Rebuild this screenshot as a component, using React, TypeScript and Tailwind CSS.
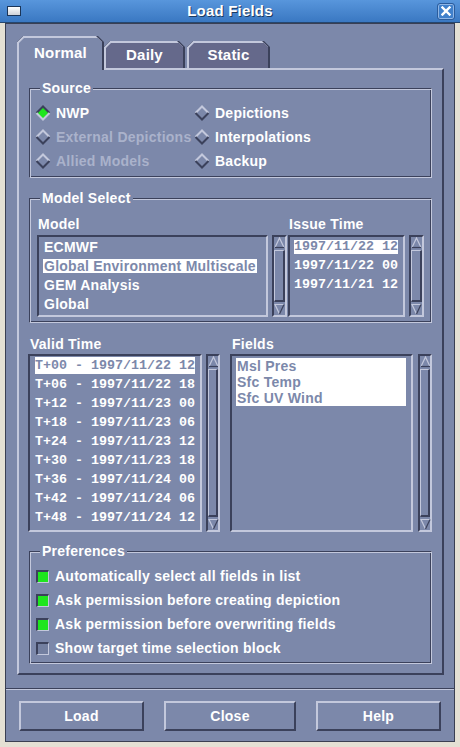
import React from 'react';

const RAISED = 'border-2 border-t-[#c3c8dc] border-l-[#c3c8dc] border-b-[#3b415b] border-r-[#3b415b]';
const SUNKEN = 'border-2 border-t-[#3b415b] border-l-[#3b415b] border-b-[#c3c8dc] border-r-[#c3c8dc]';

const sources = [
  { label: 'NWP', on: true },
  { label: 'Depictions' },
  { label: 'External Depictions', disabled: true },
  { label: 'Interpolations' },
  { label: 'Allied Models', disabled: true },
  { label: 'Backup' },
];

const models = ['ECMWF', 'Global Environment Multiscale', 'GEM Analysis', 'Global'];
const issueTimes = ['1997/11/22 12', '1997/11/22 00', '1997/11/21 12'];
const validTimes = [
  'T+00 - 1997/11/22 12',
  'T+06 - 1997/11/22 18',
  'T+12 - 1997/11/23 00',
  'T+18 - 1997/11/23 06',
  'T+24 - 1997/11/23 12',
  'T+30 - 1997/11/23 18',
  'T+36 - 1997/11/24 00',
  'T+42 - 1997/11/24 06',
  'T+48 - 1997/11/24 12',
];
const fields = ['Msl Pres', 'Sfc Temp', 'Sfc UV Wind'];
const prefs = [
  { label: 'Automatically select all fields in list', on: true },
  { label: 'Ask permission before creating depiction', on: true },
  { label: 'Ask permission before overwriting fields', on: true },
  { label: 'Show target time selection block', on: false },
];

const Diamond = ({ on }: { on?: boolean }) => {
  const hi = on ? '#3b415b' : '#c3c8dc';
  const lo = on ? '#c3c8dc' : '#3b415b';
  return (
    <svg width="16" height="16" viewBox="0 0 16 16" className="shrink-0">
      <polygon points="8,1 15,8 8,15 1,8" fill={on ? '#1ee61e' : '#7c88aa'} />
      <polyline points="1.5,8 8,1.5 14.5,8" fill="none" stroke={hi} strokeWidth="2" />
      <polyline points="1.5,8 8,14.5 14.5,8" fill="none" stroke={lo} strokeWidth="2" />
    </svg>
  );
};

const Check = ({ on }: { on: boolean }) => (
  <div
    className={`w-[13px] h-[13px] shrink-0 border-t-2 border-l-2 border-b border-r border-t-[#3b415b] border-l-[#3b415b] border-b-[#c3c8dc] border-r-[#c3c8dc] ${
      on ? 'bg-[#1ee61e]' : 'bg-[#737fa0]'
    }`}
  />
);

const GroupBox = ({ title, className, children }: { title: string; className: string; children: React.ReactNode }) => (
  <fieldset
    className={`min-w-0 border border-t-[#3b415b] border-l-[#3b415b] border-b-[#c3c8dc] border-r-[#c3c8dc] shadow-[inset_1px_1px_0_#c3c8dc,inset_-1px_-1px_0_#3b415b] ${className}`}
  >
    <legend className="ml-[10px] px-[2px] bg-[#7c88aa] text-[14px] leading-[16px] font-bold tracking-[0.25px] text-white">
      {title}
    </legend>
    {children}
  </fieldset>
);

const ScrollBar = ({ className }: { className: string }) => (
  <div className={`flex flex-col items-center ${SUNKEN} ${className}`}>
    <svg width="11" height="12" viewBox="0 0 11 12" className="shrink-0">
      <polygon points="5.5,1 10,10.5 1,10.5" fill="#7c88aa" />
      <polyline points="1,10.5 5.5,1 10,10.5" fill="none" stroke="#c3c8dc" strokeWidth="1.2" />
      <line x1="1" y1="10.5" x2="10" y2="10.5" stroke="#3b415b" strokeWidth="1.2" />
    </svg>
    <div className="flex-1 w-full my-[1px] border-t border-l border-b-2 border-r-2 border-t-[#c3c8dc] border-l-[#c3c8dc] border-b-[#3b415b] border-r-[#3b415b]" />
    <svg width="11" height="12" viewBox="0 0 11 12" className="shrink-0">
      <polygon points="1,1.5 10,1.5 5.5,11" fill="#7c88aa" />
      <polyline points="5.5,11 1,1.5 10,1.5" fill="none" stroke="#c3c8dc" strokeWidth="1.2" />
      <line x1="10" y1="1.5" x2="5.5" y2="11" stroke="#3b415b" strokeWidth="1.2" />
    </svg>
  </div>
);

const Tab = ({ label, active, className }: { label: string; active?: boolean; className: string }) => (
  <div
    className={`bg-[#3b415b] pr-[2px] [clip-path:polygon(6px_0,calc(100%_-_6px)_0,100%_6px,100%_100%,0_100%,0_6px)] ${className}`}
  >
    <div className="h-full bg-[#c3c8dc] pt-[2px] pl-[2px] [clip-path:polygon(6px_0,calc(100%_-_6px)_0,100%_6px,100%_100%,0_100%,0_6px)]">
      <div
        className={`h-full flex items-center justify-center text-white font-bold text-[15px] tracking-[0.2px] [clip-path:polygon(5px_0,calc(100%_-_4px)_0,100%_4px,100%_100%,0_100%,0_5px)] ${
          active ? 'bg-[#7c88aa] pb-[2px]' : 'bg-[#65698b]'
        }`}
      >
        {label}
      </div>
    </div>
  </div>
);

const Button = ({ label, className }: { label: string; className: string }) => (
  <div className={`h-[30px] flex items-center justify-center text-white font-bold text-[14px] tracking-[0.25px] ${RAISED} ${className}`}>
    {label}
  </div>
);

export default function App() {
  return (
    <div className="w-[460px] h-[747px] flex flex-col overflow-hidden font-['Liberation_Sans',Arial,sans-serif] text-white">
      {/* title bar */}
      <div className="h-[23px] shrink-0 grid grid-cols-[1fr_auto_1fr] items-center bg-linear-to-b from-[#5896dc] to-[#3a78c2] border-b border-[#25466f]">
        <div className="ml-[7px] w-[14px] h-[10px] border border-[#1b3558] bg-linear-to-b from-[#ffffff] to-[#cfd2d8]" />
        <div className="text-[15px] font-bold tracking-[0.2px] [text-shadow:1px_1px_0_#1c3a60]">Load Fields</div>
        <div className="justify-self-end mr-[5px] w-[18px] h-[17px] rounded-[3px] border border-[#2b5c9c] shadow-[inset_0_0_0_1px_#8fb6e6] bg-[#4080cb] flex items-center justify-center">
          <svg width="10" height="10" viewBox="0 0 10 10">
            <path d="M1.5 1.5L8.5 8.5M8.5 1.5L1.5 8.5" stroke="#ffffff" strokeWidth="2.4" strokeLinecap="square" />
          </svg>
        </div>
      </div>

      {/* window body */}
      <div className="flex-1 bg-[#e4e0d4] px-[5px] pb-[5px]">
        <div className="h-full border border-[#3a3f52] bg-[#7c88aa] flex flex-col">
          <div className="pt-[12px] pl-[11px] pr-[10px]">
            <div className="relative z-10 flex items-end">
              <Tab label="Normal" active className="w-[87px] h-[34px] mb-[-2px]" />
              <Tab label="Daily" className="w-[81px] h-[27px]" />
              <Tab label="Static" className="ml-[2px] w-[83px] h-[27px]" />
            </div>

            <div className={`h-[607px] flex flex-col ${RAISED}`}>
              {/* Source */}
              <GroupBox title="Source" className="mx-[10px] mt-[10px]">
                <div className="grid grid-cols-[159px_1fr] pl-[5px] pt-[5px] pb-[4px]">
                  {sources.map((s) => (
                    <div key={s.label} className="h-[24px] flex items-center gap-[5px]">
                      <Diamond on={s.on} />
                      <span
                        className={`text-[14px] leading-[16px] font-bold tracking-[0.25px] whitespace-nowrap ${
                          s.disabled ? 'text-[#aab2cb]' : 'text-white'
                        }`}
                      >
                        {s.label}
                      </span>
                    </div>
                  ))}
                </div>
              </GroupBox>

              {/* Model Select */}
              <GroupBox title="Model Select" className="mx-[10px] mt-[12px]">
                <div className="flex pl-[7px] pr-[7px] pt-[10px] pb-[5px]">
                  <div className="flex flex-col w-[251px]">
                    <div className="pl-[1px] h-[16px] leading-[16px] mb-[3px] text-[14px] font-bold tracking-[0.25px]">Model</div>
                    <div className="flex h-[82px]">
                      <div className={`w-[231px] pl-[4px] ${SUNKEN}`}>
                        {models.map((m, i) => (
                          <div key={m} className="h-[19px] flex items-center">
                            <span
                              className={`inline-block px-[1px] leading-[14px] text-[14px] font-bold tracking-[0.25px] whitespace-nowrap ${
                                i === 1 ? 'bg-white text-[#7c88aa]' : 'text-white'
                              }`}
                            >
                              {m}
                            </span>
                          </div>
                        ))}
                      </div>
                      <ScrollBar className="ml-[4px] w-[15px]" />
                    </div>
                  </div>
                  <div className="flex flex-col">
                    <div className="pl-[1px] h-[16px] leading-[16px] mb-[3px] text-[14px] font-bold tracking-[0.25px]">Issue Time</div>
                    <div className="flex h-[82px]">
                      <div className={`w-[117px] pl-[4px] ${SUNKEN}`}>
                        {issueTimes.map((t, i) => (
                          <div key={t} className="h-[19px] flex items-center">
                            <span
                              className={`inline-block leading-[14px] text-[13.33px] font-bold whitespace-pre font-['Liberation_Mono',monospace] ${
                                i === 0 ? 'bg-white text-[#7c88aa]' : 'text-white'
                              }`}
                            >
                              {t}
                            </span>
                          </div>
                        ))}
                      </div>
                      <ScrollBar className="ml-[4px] w-[15px]" />
                    </div>
                  </div>
                </div>
              </GroupBox>

              {/* Valid Time / Fields */}
              <div className="flex ml-[9px] mr-[10px] mt-[13px]">
                <div className="flex flex-col w-[202px]">
                  <div className="pl-[2px] h-[16px] leading-[16px] mb-[2px] text-[14px] font-bold tracking-[0.25px]">Valid Time</div>
                  <div className="flex h-[178px]">
                    <div className={`w-[174px] pl-[5px] ${SUNKEN}`}>
                      {validTimes.map((t, i) => (
                        <div key={t} className="h-[19px] flex items-center">
                          <span
                            className={`inline-block leading-[17px] text-[13.33px] font-bold whitespace-pre font-['Liberation_Mono',monospace] ${
                              i === 0 ? 'bg-white text-[#7c88aa]' : 'text-white'
                            }`}
                          >
                            {t}
                          </span>
                        </div>
                      ))}
                    </div>
                    <ScrollBar className="ml-[4px] w-[14px]" />
                  </div>
                </div>
                <div className="flex flex-col flex-1">
                  <div className="pl-[2px] h-[16px] leading-[16px] mb-[2px] text-[14px] font-bold tracking-[0.25px]">Fields</div>
                  <div className="flex h-[178px]">
                    <div className={`w-[183px] pl-[4px] pr-[5px] pt-[2px] ${SUNKEN}`}>
                      <div className="bg-white">
                        {fields.map((f) => (
                          <div
                            key={f}
                            className="h-[16px] flex items-center pl-[1px] text-[14px] font-bold tracking-[0.25px] text-[#7c88aa] whitespace-nowrap"
                          >
                            {f}
                          </div>
                        ))}
                      </div>
                    </div>
                    <ScrollBar className="ml-[5px] w-[14px]" />
                  </div>
                </div>
              </div>

              {/* Preferences */}
              <GroupBox title="Preferences" className="mx-[10px] mt-[11px]">
                <div className="flex flex-col pl-[6px] pt-[5px] pb-[3px]">
                  {prefs.map((p) => (
                    <div key={p.label} className="h-[24px] flex items-center gap-[6px]">
                      <Check on={p.on} />
                      <span className="text-[14px] leading-[16px] font-bold tracking-[0.25px] whitespace-nowrap">{p.label}</span>
                    </div>
                  ))}
                </div>
              </GroupBox>
            </div>
          </div>

          {/* separator */}
          <div className="mt-[13px] h-[2px] border-t border-b border-t-[#3b415b] border-b-[#c3c8dc]" />

          {/* buttons */}
          <div className="flex mt-[11px] pl-[13px]">
            <Button label="Load" className="w-[125px]" />
            <Button label="Close" className="ml-[20px] w-[132px]" />
            <Button label="Help" className="ml-[20px] w-[125px]" />
          </div>
        </div>
      </div>
    </div>
  );
}
